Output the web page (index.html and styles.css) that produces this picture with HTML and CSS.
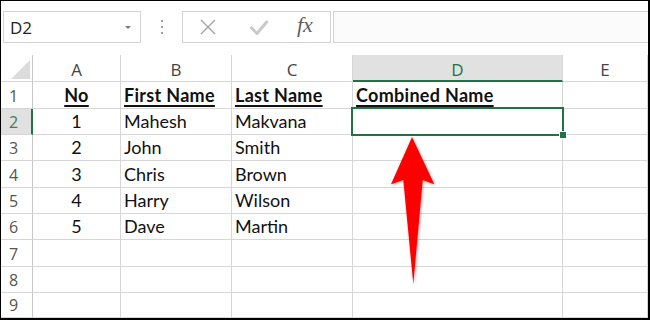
FILE: index.html
```
<!DOCTYPE html>
<html>
<head>
    <title>Combined Name</title>
    <link rel="stylesheet" href="styles.css">
</head>
<body>
<div class="frame">
    <!-- name box + formula bar -->
    <div class="toolbar">
        <div class="namebox">
            <span class="ref">D2</span>
            <span class="caret"></span>
        </div>
        <div class="grip"><i></i><i></i><i></i></div>
        <div class="fxgroup">
            <svg class="btn" width="16" height="16" viewBox="0 0 16 16">
                <path d="M1 1 L15 15 M15 1 L1 15" stroke="#a3a3a3" stroke-width="1.4" fill="none"/>
            </svg>
            <svg class="btn" width="20" height="16" viewBox="0 0 20 16">
                <polyline points="1.5,8 8,14.5 18.5,2" stroke="#c9c9c9" stroke-width="3" fill="none"/>
            </svg>
            <span class="fx">fx</span>
        </div>
        <div class="formula"></div>
    </div>

    <!-- sheet grid -->
    <div class="sheet">
        <div class="corner"><span class="tri"></span></div>
        <div class="colhead">A</div>
        <div class="colhead">B</div>
        <div class="colhead">C</div>
        <div class="colhead active">D</div>
        <div class="colhead">E</div>

        <div class="rowhead">1</div>
        <div class="cell center bold"><u>No</u></div>
        <div class="cell bold"><u>First Name</u></div>
        <div class="cell bold"><u>Last Name</u></div>
        <div class="cell bold"><u>Combined Name</u></div>
        <div class="cell"></div>

        <div class="rowhead active">2</div>
        <div class="cell center">1</div>
        <div class="cell">Mahesh</div>
        <div class="cell">Makvana</div>
        <div class="cell selected"><span class="sel"><span class="handle"></span></span></div>
        <div class="cell"></div>

        <div class="rowhead">3</div>
        <div class="cell center">2</div>
        <div class="cell">John</div>
        <div class="cell">Smith</div>
        <div class="cell"></div>
        <div class="cell"></div>

        <div class="rowhead">4</div>
        <div class="cell center">3</div>
        <div class="cell">Chris</div>
        <div class="cell">Brown</div>
        <div class="cell"></div>
        <div class="cell"></div>

        <div class="rowhead">5</div>
        <div class="cell center">4</div>
        <div class="cell">Harry</div>
        <div class="cell">Wilson</div>
        <div class="cell"></div>
        <div class="cell"></div>

        <div class="rowhead">6</div>
        <div class="cell center">5</div>
        <div class="cell">Dave</div>
        <div class="cell">Martin</div>
        <div class="cell"></div>
        <div class="cell"></div>

        <div class="rowhead">7</div>
        <div class="cell"></div>
        <div class="cell"></div>
        <div class="cell"></div>
        <div class="cell"></div>
        <div class="cell"></div>

        <div class="rowhead">8</div>
        <div class="cell"></div>
        <div class="cell"></div>
        <div class="cell"></div>
        <div class="cell"></div>
        <div class="cell"></div>

        <div class="rowhead">9</div>
        <div class="cell"></div>
        <div class="cell"></div>
        <div class="cell"></div>
        <div class="cell"></div>
        <div class="cell"></div>
    </div>

    <!-- red arrow pointing at D2 -->
    <svg class="arrow" width="60" height="160" viewBox="0 0 60 160">
        <polygon points="27,7 49.3,54.3 37.7,50 28.3,154 18.3,50 6,54.3" fill="#ff0000"/>
    </svg>
</div>
</body>
</html>
```

FILE: styles.css
```
body{
    margin: 0;
    background: #fff;
}
.frame{
    position: relative;
    width: 650px;
    height: 320px;
    box-sizing: border-box;
    border-top: 1px solid #000;
    border-left: 1px solid #000;
    border-right: 2px solid #000;
    border-bottom: 2px solid #000;
    overflow: hidden;
    background: #fff;
}
.toolbar{
    height: 54px;
    display: flex;
    align-items: flex-start;
    padding: 10px 0 0 2px;
    box-sizing: border-box;
}
.namebox{
    width: 138px;
    height: 32px;
    box-sizing: border-box;
    border: 1px solid #d4d4d4;
    display: flex;
    align-items: center;
    justify-content: space-between;
    padding: 0 9px 0 6px;
}
.ref{
    font-family: "Open Sans", sans-serif;
    font-size: 17px;
    color: #222;
}
.caret{
    width: 0;
    height: 0;
    border-left: 3px solid transparent;
    border-right: 3px solid transparent;
    border-top: 3px solid #7a7a7a;
}
.grip{
    width: 41px;
    height: 32px;
    display: flex;
    flex-direction: column;
    align-items: center;
    justify-content: center;
    gap: 4px;
}
.grip i{
    display: block;
    width: 2px;
    height: 2px;
    background: #a0a0a0;
}
.fxgroup{
    width: 149px;
    height: 32px;
    box-sizing: border-box;
    border: 1px solid #d4d4d4;
    display: flex;
    align-items: center;
    padding-left: 17px;
}
.fxgroup .btn:first-child{
    margin-right: 33px;
}
.fxgroup .btn:nth-child(2){
    margin-right: 28px;
}
.fx{
    font-family: "Liberation Serif", serif;
    font-style: italic;
    font-size: 22px;
    color: #5f5f5f;
    margin-top: -4px;
}
.formula{
    flex: 1;
    height: 32px;
    box-sizing: border-box;
    border: 1px solid #d4d4d4;
    background: #fbfbfb;
    margin-left: 2px;
    margin-right: -4px;
}
.sheet{
    display: grid;
    grid-template-columns: 32px 88px 111px 121px 210px 85px;
    grid-template-rows: 27px 27px 26px 26px 27px 26px 26px 27px 26px 25px;
}
.sheet > div{
    box-sizing: border-box;
    border-right: 1px solid #d6d6d6;
    border-bottom: 1px solid #d6d6d6;
}
.corner{
    position: relative;
    border-right-color: #c8c8c8 !important;
}
.tri{
    position: absolute;
    right: 2px;
    bottom: 2px;
    width: 0;
    height: 0;
    border-left: 19px solid transparent;
    border-bottom: 19px solid #dcdcdc;
}
.colhead{
    display: flex;
    align-items: flex-end;
    justify-content: center;
    padding-bottom: 3px;
    font-family: "Open Sans", sans-serif;
    font-size: 17px;
    line-height: 17px;
    color: #444;
}
.colhead.active{
    background: #e1e1e1;
    color: #217346;
    border-bottom: 2px solid #217346 !important;
    padding-bottom: 2px;
}
.rowhead{
    display: flex;
    align-items: flex-end;
    padding: 0 0 3px 8px;
    font-family: "Open Sans", sans-serif;
    font-size: 16px;
    line-height: 17px;
    color: #555;
    border-right-color: #c8c8c8 !important;
}
.rowhead.active{
    background: #e1e1e1;
    color: #3f7a5a;
    border-right: 2px solid #217346 !important;
}
.cell{
    display: flex;
    align-items: flex-end;
    padding: 0 3px 4px 3px;
    font-family: "Lato", sans-serif;
    font-size: 18px;
    line-height: 17px;
    color: #111;
    white-space: nowrap;
}
.center{
    justify-content: center;
}
.bold{
    font-weight: bold;
    letter-spacing: 0.3px;
}
.bold u{
    text-decoration-thickness: 1.5px;
    text-underline-offset: 3px;
}
.selected{
    position: relative;
}
.sel{
    position: absolute;
    top: -2px;
    left: -2px;
    right: -2px;
    bottom: -2px;
    border: 2px solid #217346;
}
.handle{
    position: absolute;
    right: -4px;
    bottom: -4px;
    width: 6px;
    height: 6px;
    background: #217346;
    outline: 1px solid #fff;
}
.arrow{
    position: absolute;
    left: 384px;
    top: 129px;
    filter: drop-shadow(1px 1px 1.5px rgba(0,0,0,0.35));
}
```
